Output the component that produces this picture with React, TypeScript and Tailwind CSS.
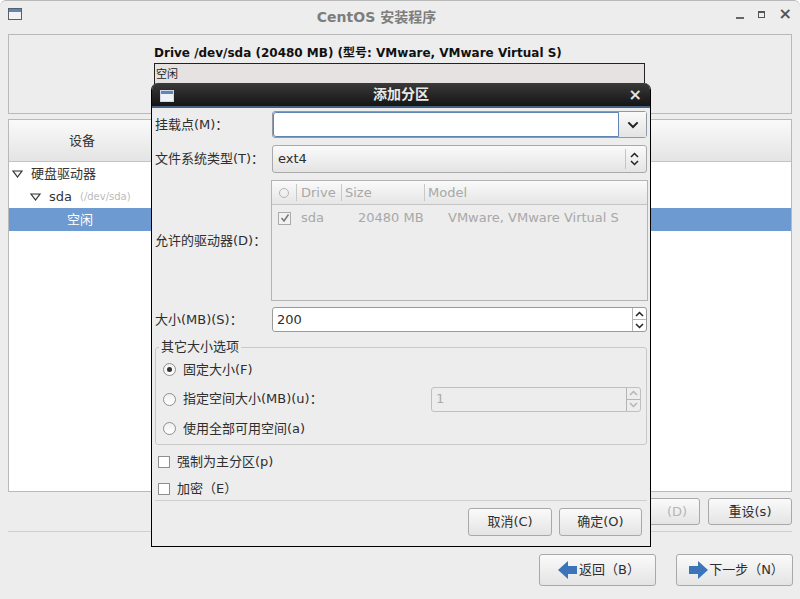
import React from 'react'

const face = 'rounded-[3px] border border-[#a9a9a9] bg-gradient-to-b from-[#fafafa] to-[#e4e4e4] text-[13px] text-[#2e2e2e]'
const btn = `flex items-center justify-center ${face}`

function Chevron({ up, color = '#222', big }: { up?: boolean; color?: string; big?: boolean }) {
    return (
        <svg width={big ? 12 : 9} height={big ? 8 : 6} viewBox="0 0 9 6" fill="none">
            <path d={up ? 'M1 5l3.5-3.5L8 5' : 'M1 1l3.5 3.5L8 1'} stroke={color} strokeWidth="1.5" />
        </svg>
    )
}

function Tri({ className }: { className?: string }) {
    return (
        <svg width="11" height="8" viewBox="0 0 11 8" fill="none" className={className}>
            <path d="M1 1h9L5.5 7z" stroke="#333" strokeWidth="1.2" fill="#f4f4f4" />
        </svg>
    )
}

function WinIcon({ light }: { light?: boolean }) {
    return (
        <div className={`flex h-[12px] w-[14px] flex-col border ${light ? 'border-[#cfd8e2] bg-[#eef2f6]' : 'border-[#56606c] bg-[#f2f2f2]'}`}>
            <div className="h-[3px] bg-[#5f85b4]" />
        </div>
    )
}

function Radio({ checked }: { checked?: boolean }) {
    return (
        <div className="flex h-[13px] w-[13px] items-center justify-center rounded-full border border-[#8f8f8f] bg-gradient-to-b from-[#f0f0f0] to-white">
            {checked && <div className="h-[5px] w-[5px] rounded-full bg-[#333]" />}
        </div>
    )
}

function Spin({ disabled }: { disabled?: boolean }) {
    const c = disabled ? '#b5b5b5' : '#222'
    return (
        <div className="flex w-[14px] flex-col border-l border-[#b5b5b5]">
            <div className="flex flex-1 items-center justify-center border-b border-[#b5b5b5]"><Chevron up color={c} /></div>
            <div className="flex flex-1 items-center justify-center"><Chevron color={c} /></div>
        </div>
    )
}

function Label({ children, className = '' }: { children: React.ReactNode; className?: string }) {
    return <div className={`w-[117px] shrink-0 text-[13px] text-[#2e2e2e] ${className}`}>{children}</div>
}

function Dialog() {
    return (
        <div className="absolute left-[151px] top-[82px] flex h-[464px] w-[500px] flex-col overflow-hidden rounded-t-[7px] border-x border-b border-black bg-[#ededed]">
            <div className="relative flex h-[25px] shrink-0 items-center justify-center border-b-2 border-[#46627f] bg-gradient-to-b from-[#3a3a3a] to-[#151515] text-[14px] font-bold text-[#e8e8e8]">
                <div className="absolute left-[8px] top-[7px]"><WinIcon light /></div>
                <span>添加分区</span>
                <div className="absolute right-[8px] top-[2px] text-[16px] font-bold leading-[20px] text-[#e6e6e6]">×</div>
            </div>

            <div className="flex flex-1 flex-col pl-[3px] pr-[3px]">
                <div className="mt-[3px] flex h-[27px] items-center">
                    <Label>挂载点(M)：</Label>
                    <div className="flex h-[27px] flex-1 rounded-[3px] border border-[#8f99a8]">
                        <div className="flex-1 rounded-l-[3px] border border-[#5f85b4] bg-white" />
                        <div className="flex w-[27px] items-center justify-center bg-gradient-to-b from-[#fafafa] to-[#e4e4e4]"><Chevron big /></div>
                    </div>
                </div>
                <div className="mt-[7px] flex h-[28px] items-center">
                    <Label>文件系统类型(T)：</Label>
                    <div className={`${face} flex h-[28px] flex-1 items-center justify-between pl-[5px] pr-[5px]`}>
                        <span>ext4</span>
                        <div className="flex h-[20px] w-[16px] flex-col items-center justify-center gap-[2px] border-l border-[#c4c4c4] pl-[2px]">
                            <Chevron up /><Chevron />
                        </div>
                    </div>
                </div>
                <div className="mt-[7px] flex h-[121px] items-center">
                    <Label>允许的驱动器(D)：</Label>
                    <div className="-ml-[1px] -mr-[1px] flex h-full flex-1 flex-col border border-[#b4b4b4] bg-[#ededed] text-[13px] text-[#a8a8a8]">
                        <div className="flex h-[24px] items-center border-b border-[#c4c4c4] bg-gradient-to-b from-[#fafafa] to-[#e6e6e6]">
                            <div className="flex w-[24px] justify-center"><div className="h-[10px] w-[10px] rounded-full border border-[#b4b4b4]" /></div>
                            <div className="h-[17px] border-l border-[#c8c8c8]" />
                            <div className="w-[44px] pl-[4px]">Drive</div>
                            <div className="h-[17px] border-l border-[#c8c8c8]" />
                            <div className="w-[82px] pl-[3px]">Size</div>
                            <div className="h-[17px] border-l border-[#c8c8c8]" />
                            <div className="pl-[3px]">Model</div>
                        </div>
                        <div className="mt-[3px] flex h-[20px] items-center">
                            <div className="flex w-[25px] justify-center">
                                <div className="flex h-[13px] w-[13px] items-center justify-center border border-[#aaa] bg-[#f2f2f2]">
                                    <svg width="10" height="10" viewBox="0 0 10 10" fill="none"><path d="M1.5 5l2.5 3L8.5 1.5" stroke="#777" strokeWidth="1.5" /></svg>
                                </div>
                            </div>
                            <div className="w-[61px] pl-[4px]">sda</div>
                            <div className="w-[90px]">20480 MB</div>
                            <div>VMware, VMware Virtual S</div>
                        </div>
                    </div>
                </div>
                <div className="mt-[6px] flex h-[25px] items-center">
                    <Label>大小(MB)(S)：</Label>
                    <div className="flex h-[25px] flex-1 rounded-[3px] border border-[#9a9a9a] bg-white text-[13px] text-[#2e2e2e]">
                        <div className="flex flex-1 items-center pl-[4px]">200</div>
                        <Spin />
                    </div>
                </div>
                <div className="relative mt-[15px] h-[98px] rounded-[3px] border border-[#c9c9c9] pl-[7px]">
                    <div className="absolute left-[3px] top-[-9px] bg-[#ededed] px-[2px] text-[13px] leading-[16px] text-[#2e2e2e]">其它大小选项</div>
                    <div className="flex h-[96px] flex-col pt-[7px] text-[13px] text-[#2e2e2e]">
                        <div className="flex h-[29px] items-center gap-[7px]"><Radio checked />固定大小(F)</div>
                        <div className="flex h-[30px] items-center gap-[7px]">
                            <Radio />指定空间大小(MB)(u)：
                            <div className="ml-auto mr-[5px] flex h-[25px] w-[210px] rounded-[3px] border border-[#c0c0c0] text-[#aaa]">
                                <div className="flex flex-1 items-center pl-[4px]">1</div>
                                <Spin disabled />
                            </div>
                        </div>
                        <div className="flex h-[29px] items-center gap-[7px]"><Radio />使用全部可用空间(a)</div>
                    </div>
                </div>
                <div className="mt-[3px] flex h-[27px] items-center gap-[7px] pl-[3px] text-[13px] text-[#2e2e2e]">
                    <div className="h-[12px] w-[12px] border border-[#8f8f8f] bg-white" />强制为主分区(p)
                </div>
                <div className="flex h-[26px] items-center gap-[7px] pl-[3px] pt-[1px] text-[13px] text-[#2e2e2e]">
                    <div className="h-[12px] w-[12px] border border-[#8f8f8f] bg-white" />加密（E）
                </div>
                <div className="-mt-[1px] border-t border-[#cfcfcf]" />
                <div className="mt-[7px] flex justify-end gap-[7px] pr-[5px]">
                    <div className={`${btn} h-[28px] w-[84px]`}>取消(C)</div>
                    <div className={`${btn} h-[28px] w-[83px]`}>确定(O)</div>
                </div>
            </div>
        </div>
    )
}

export default function App() {
    return (
        <div className="relative flex h-[599px] w-[800px] flex-col overflow-hidden rounded-t-[6px] border-t border-[#b8b8b8] bg-[#ededed] font-['DejaVu_Sans','Noto_Sans_CJK_SC',sans-serif]">
            <div className="relative flex h-[33px] shrink-0 items-center justify-center pr-[47px] text-[14px] font-bold text-[#7d7d7d]">
                <div className="absolute left-[8px] top-[7px]"><WinIcon /></div>
                CentOS 安装程序
                <div className="absolute right-[8px] top-[3px] flex items-center gap-[14px] text-[#555]">
                    <div className="mt-[8px] h-[2px] w-[8px] bg-[#666]" />
                    <div className="h-[7px] w-[7px] border border-[#555] border-t-2" />
                    <div className="text-[16px] font-bold leading-[20px]">×</div>
                </div>
            </div>

            <div className="flex flex-1 flex-col px-[8px]">
                <div className="h-[80px] shrink-0 border border-[#b9b9b9] pl-[145px] pt-[9px]">
                    <div className="text-[12px] font-bold leading-[18px] text-[#111]">Drive /dev/sda (20480 MB) (型号: VMware, VMware Virtual S)</div>
                    <div className="mt-[1px] h-[30px] w-[491px] border border-[#222] bg-[#e6e2e2] pl-[1px] text-[11px] leading-[22px] text-[#222]">空闲</div>
                </div>

                <div className="mt-[5px] flex h-[373px] shrink-0 flex-col border border-[#b9b9b9] bg-white">
                    <div className="flex h-[42px] items-center border-b border-[#c4c4c4] bg-gradient-to-b from-[#fafafa] to-[#e4e4e4] pl-[60px] text-[13px] text-[#333]">设备</div>
                    <div className="flex h-[23px] items-center gap-[8px] pl-[3px] text-[13px] text-[#333]"><Tri />硬盘驱动器</div>
                    <div className="flex h-[23px] items-center gap-[8px] pl-[21px] text-[13px] text-[#333]"><Tri />sda <span className="text-[10px] text-[#bbb]">(/dev/sda)</span></div>
                    <div className="flex h-[23px] items-center bg-[#6d9ad0] pl-[58px] text-[13px] text-white">空闲</div>
                </div>

                <div className="mt-[6px] flex justify-end gap-[8px]">
                    <div className={`${btn} h-[27px] w-[60px] pl-[14px] text-[#b5b5b5]`}>(D)</div>
                    <div className={`${btn} h-[27px] w-[84px]`}>重设(s)</div>
                </div>
                <div className="mt-[6px] border-t border-[#cfcfcf]" />
                <div className="mt-[22px] -mr-[1px] flex justify-end gap-[20px]">
                    <div className={`${btn} h-[32px] w-[117px] gap-[1px] pl-[3px]`}>
                        <svg width="20" height="18" viewBox="0 0 20 18"><path d="M0 9l10-9v5h9v8h-9v5z" fill="#3b74b8" /></svg>
                        返回（B）
                    </div>
                    <div className={`${btn} h-[32px] w-[117px] gap-[1px] border-[#8b9bb0] pl-[3px]`}>
                        <svg width="20" height="18" viewBox="0 0 20 18"><path d="M20 9l-10-9v5H1v8h9v5z" fill="#3b74b8" /></svg>
                        下一步（N）
                    </div>
                </div>
            </div>

            <Dialog />
        </div>
    )
}
